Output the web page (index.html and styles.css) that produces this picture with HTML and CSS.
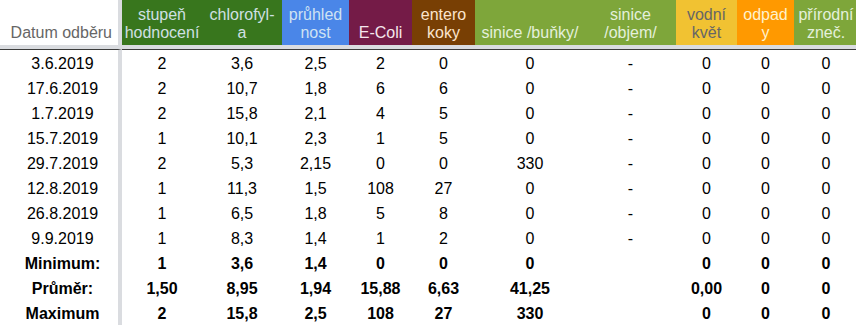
FILE: index.html
```html
<!DOCTYPE html>
<html lang="cs">
<head>
<meta charset="utf-8">
<title>Datum odběru</title>
<link rel="stylesheet" href="styles.css">
</head>
<body>
<table class="sheet">
  <colgroup>
    <col class="w-date"><col class="w80"><col class="w80"><col class="w67"><col class="w63"><col class="w63"><col class="w110"><col class="w91"><col class="w61"><col class="w57"><col class="w64">
  </colgroup>
  <thead>
    <tr>
      <th class="date-h">Datum odběru</th>
      <th class="c-green">stupeň<br>hodnocení</th>
      <th class="c-green">chlorofyl-<br>a</th>
      <th class="c-blue">průhled<br>nost</th>
      <th class="c-maroon">E-Coli</th>
      <th class="c-brown">entero<br>koky</th>
      <th class="c-olive">sinice /buňky/</th>
      <th class="c-olive">sinice<br>/objem/</th>
      <th class="c-yellow">vodní<br>květ</th>
      <th class="c-orange">odpad<br>y</th>
      <th class="c-olive">přírodní<br>zneč.</th>
    </tr>
  </thead>
  <tbody>
    <tr class="first"><td class="date">3.6.2019</td><td>2</td><td>3,6</td><td>2,5</td><td>2</td><td>0</td><td>0</td><td>-</td><td>0</td><td>0</td><td>0</td></tr>
    <tr><td class="date">17.6.2019</td><td>2</td><td>10,7</td><td>1,8</td><td>6</td><td>6</td><td>0</td><td>-</td><td>0</td><td>0</td><td>0</td></tr>
    <tr><td class="date">1.7.2019</td><td>2</td><td>15,8</td><td>2,1</td><td>4</td><td>5</td><td>0</td><td>-</td><td>0</td><td>0</td><td>0</td></tr>
    <tr><td class="date">15.7.2019</td><td>1</td><td>10,1</td><td>2,3</td><td>1</td><td>5</td><td>0</td><td>-</td><td>0</td><td>0</td><td>0</td></tr>
    <tr><td class="date">29.7.2019</td><td>2</td><td>5,3</td><td>2,15</td><td>0</td><td>0</td><td>330</td><td>-</td><td>0</td><td>0</td><td>0</td></tr>
    <tr><td class="date">12.8.2019</td><td>1</td><td>11,3</td><td>1,5</td><td>108</td><td>27</td><td>0</td><td>-</td><td>0</td><td>0</td><td>0</td></tr>
    <tr><td class="date">26.8.2019</td><td>1</td><td>6,5</td><td>1,8</td><td>5</td><td>8</td><td>0</td><td>-</td><td>0</td><td>0</td><td>0</td></tr>
    <tr><td class="date">9.9.2019</td><td>1</td><td>8,3</td><td>1,4</td><td>1</td><td>2</td><td>0</td><td>-</td><td>0</td><td>0</td><td>0</td></tr>
    <tr class="sum"><td class="date">Minimum:</td><td>1</td><td>3,6</td><td>1,4</td><td>0</td><td>0</td><td>0</td><td></td><td>0</td><td>0</td><td>0</td></tr>
    <tr class="sum"><td class="date">Průměr:</td><td>1,50</td><td>8,95</td><td>1,94</td><td>15,88</td><td>6,63</td><td>41,25</td><td></td><td>0,00</td><td>0</td><td>0</td></tr>
    <tr class="sum"><td class="date">Maximum</td><td>2</td><td>15,8</td><td>2,5</td><td>108</td><td>27</td><td>330</td><td></td><td>0</td><td>0</td><td>0</td></tr>
  </tbody>
</table>
</body>
</html>
```

FILE: styles.css
```css
html, body {
  margin: 0;
  padding: 0;
  background: #ffffff;
  overflow: hidden;
}

body {
  width: 856px;
  height: 325px;
  font-family: "Liberation Sans", Arial, sans-serif;
  font-size: 16px;
  color: #000000;
}

.sheet {
  border-collapse: separate;
  border-spacing: 0;
  table-layout: fixed;
  width: 858px;
}

.w-date { width: 122px; }
.w80 { width: 80px; }
.w67 { width: 67px; }
.w63 { width: 63px; }
.w110 { width: 110px; }
.w91 { width: 91px; }
.w61 { width: 61px; }
.w57 { width: 57px; }
.w64 { width: 64px; }

.sheet th {
  height: 49px;
  padding: 0 0 3px 0;
  box-sizing: border-box;
  font-weight: normal;
  line-height: 18px;
  vertical-align: bottom;
  text-align: center;
  white-space: nowrap;
  border-bottom: 4px solid #dadce0;
}

.sheet th.date-h {
  color: #666666;
  text-align: right;
  padding-right: 6px;
  border-right: 4px solid #dadce0;
}

.c-green { background: #38761d; color: #d0e0e3; }
.c-blue { background: #4a86e8; color: #cfe2f3; }
.c-maroon { background: #741b47; color: #f4e6ec; }
.c-brown { background: #783f04; color: #fce5cd; }
.c-olive { background: #7ea63a; color: #e4f0dc; }
.c-yellow { background: #f1c232; color: #666666; }
.c-orange { background: #ff9900; color: #fff2cc; }

.sheet td {
  height: 25px;
  padding: 0 0 2px 0;
  box-sizing: border-box;
  line-height: 18px;
  vertical-align: bottom;
  text-align: center;
  white-space: nowrap;
}

.sheet td.date {
  padding-left: 7px;
  border-right: 4px solid #dadce0;
}

.sheet tr.first td {
  border-top: 1px solid #3c3c3c;
  height: 26px;
}

.sheet tr.sum td {
  font-weight: bold;
}
```
